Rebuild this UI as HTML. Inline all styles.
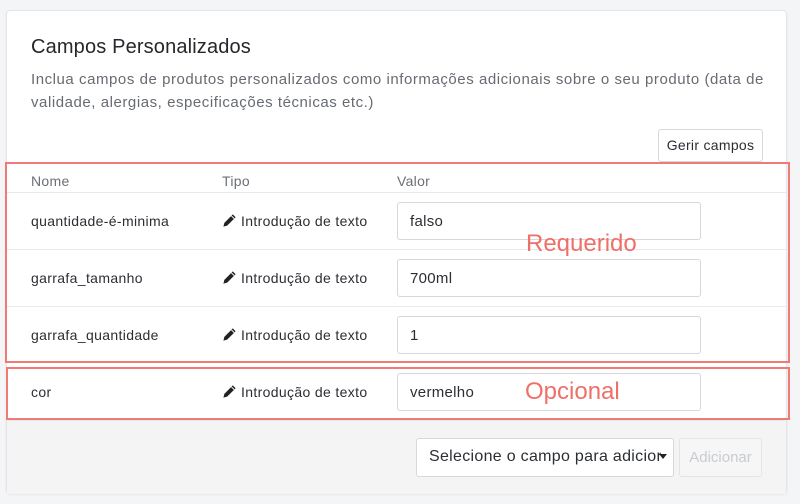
<!DOCTYPE html>
<html><head><meta charset="utf-8"><style>
body{margin:0;width:800px;height:504px;background:#f4f5f7;font-family:"Liberation Sans",sans-serif;position:relative;overflow:hidden;color:#1f2328}
.a{position:absolute}
.card{left:6px;top:10px;width:781px;height:484px;background:#fff;border:1px solid #e3e5e8;border-radius:4px;box-sizing:border-box;box-shadow:0 1px 2px rgba(0,0,0,.06)}
.foot{left:7px;top:420px;width:779px;height:73px;background:#f4f4f5;border-top:1px solid #e6e7e9}
.line{left:7px;width:779px;height:1px;background:#e8e9eb}
.t{font-size:14px;color:#2b2e33;letter-spacing:.35px}
.inp{left:397px;width:304px;height:38px;border:1px solid #d5d8dc;border-radius:3px;box-sizing:border-box;font-size:15px;padding:10px 12px;color:#2b2e33;background:#fff;letter-spacing:.3px}
.red{border:2px solid #ef7b76;box-sizing:border-box}
.pen{display:inline-block;vertical-align:-2px;margin-right:4px}
</style></head><body>
<div class="a card"></div>
<div class="a" style="left:31px;top:36px;font-size:20px;color:#24272b;letter-spacing:.15px">Campos Personalizados</div>
<div class="a" style="left:31px;top:68px;width:745px;font-size:15px;line-height:23px;color:#676b72;letter-spacing:.55px">Inclua campos de produtos personalizados como informações adicionais sobre o seu produto (data de validade, alergias, especificações técnicas etc.)</div>
<div class="a" style="left:658px;top:129px;width:105px;height:33px;border:1px solid #d5d8dc;border-radius:3px;box-sizing:border-box;font-size:14px;text-align:center;line-height:31px;color:#2b2e33;letter-spacing:.3px">Gerir campos</div>

<div class="a" style="left:31px;top:173px;font-size:14px;color:#6b6f76;letter-spacing:.3px">Nome</div>
<div class="a" style="left:222px;top:173px;font-size:14px;color:#6b6f76;letter-spacing:.3px">Tipo</div>
<div class="a" style="left:397px;top:173px;font-size:14px;color:#6b6f76;letter-spacing:.3px">Valor</div>
<div class="a line" style="top:192px"></div>
<div class="a line" style="top:249px"></div>
<div class="a line" style="top:306px"></div>

<div class="a t" style="left:31px;top:213px">quantidade-é-minima</div>
<div class="a t" style="left:31px;top:270px">garrafa_tamanho</div>
<div class="a t" style="left:31px;top:327px">garrafa_quantidade</div>
<div class="a t" style="left:31px;top:384px">cor</div>

<div class="a t" style="left:222px;top:213px"><svg class="pen" width="15" height="15" viewBox="0 0 16 16"><path d="M11.5 1.5l3 3L5.5 13.5l-4 1 1-4z" fill="#222"/><path d="M10 3l3 3" stroke="#fff" stroke-width="1"/></svg>Introdução de texto</div>
<div class="a t" style="left:222px;top:270px"><svg class="pen" width="15" height="15" viewBox="0 0 16 16"><path d="M11.5 1.5l3 3L5.5 13.5l-4 1 1-4z" fill="#222"/><path d="M10 3l3 3" stroke="#fff" stroke-width="1"/></svg>Introdução de texto</div>
<div class="a t" style="left:222px;top:327px"><svg class="pen" width="15" height="15" viewBox="0 0 16 16"><path d="M11.5 1.5l3 3L5.5 13.5l-4 1 1-4z" fill="#222"/><path d="M10 3l3 3" stroke="#fff" stroke-width="1"/></svg>Introdução de texto</div>
<div class="a t" style="left:222px;top:384px"><svg class="pen" width="15" height="15" viewBox="0 0 16 16"><path d="M11.5 1.5l3 3L5.5 13.5l-4 1 1-4z" fill="#222"/><path d="M10 3l3 3" stroke="#fff" stroke-width="1"/></svg>Introdução de texto</div>

<div class="a inp" style="top:202px">falso</div>
<div class="a inp" style="top:259px">700ml</div>
<div class="a inp" style="top:316px">1</div>
<div class="a inp" style="top:373px">vermelho</div>

<div class="a foot"></div>
<div class="a" style="left:416px;top:438px;width:258px;height:39px;border:1px solid #d5d8dc;border-radius:3px;box-sizing:border-box;background:#fff"></div>
<div class="a" style="left:429px;top:448px;width:232px;font-size:16px;color:#2b2e33;white-space:nowrap;overflow:hidden;letter-spacing:.3px">Selecione o campo para adicionar</div>
<div class="a" style="left:659px;top:454px;width:0;height:0;border-left:4px solid transparent;border-right:4px solid transparent;border-top:5px solid #222"></div>
<div class="a" style="left:679px;top:438px;width:83px;height:39px;border:1px solid #e2e4e7;border-radius:3px;box-sizing:border-box;font-size:15px;text-align:center;line-height:37px;color:#c8ccd1;background:#f6f6f7">Adicionar</div>

<div class="a red" style="left:5px;top:162px;width:785px;height:201px"></div>
<div class="a red" style="left:6px;top:367px;width:784px;height:53px"></div>
<div class="a" style="left:526px;top:230px;font-size:24px;color:#ef6f69">Requerido</div>
<div class="a" style="left:525px;top:378px;font-size:24px;color:#ef6f69">Opcional</div>
</body></html>
